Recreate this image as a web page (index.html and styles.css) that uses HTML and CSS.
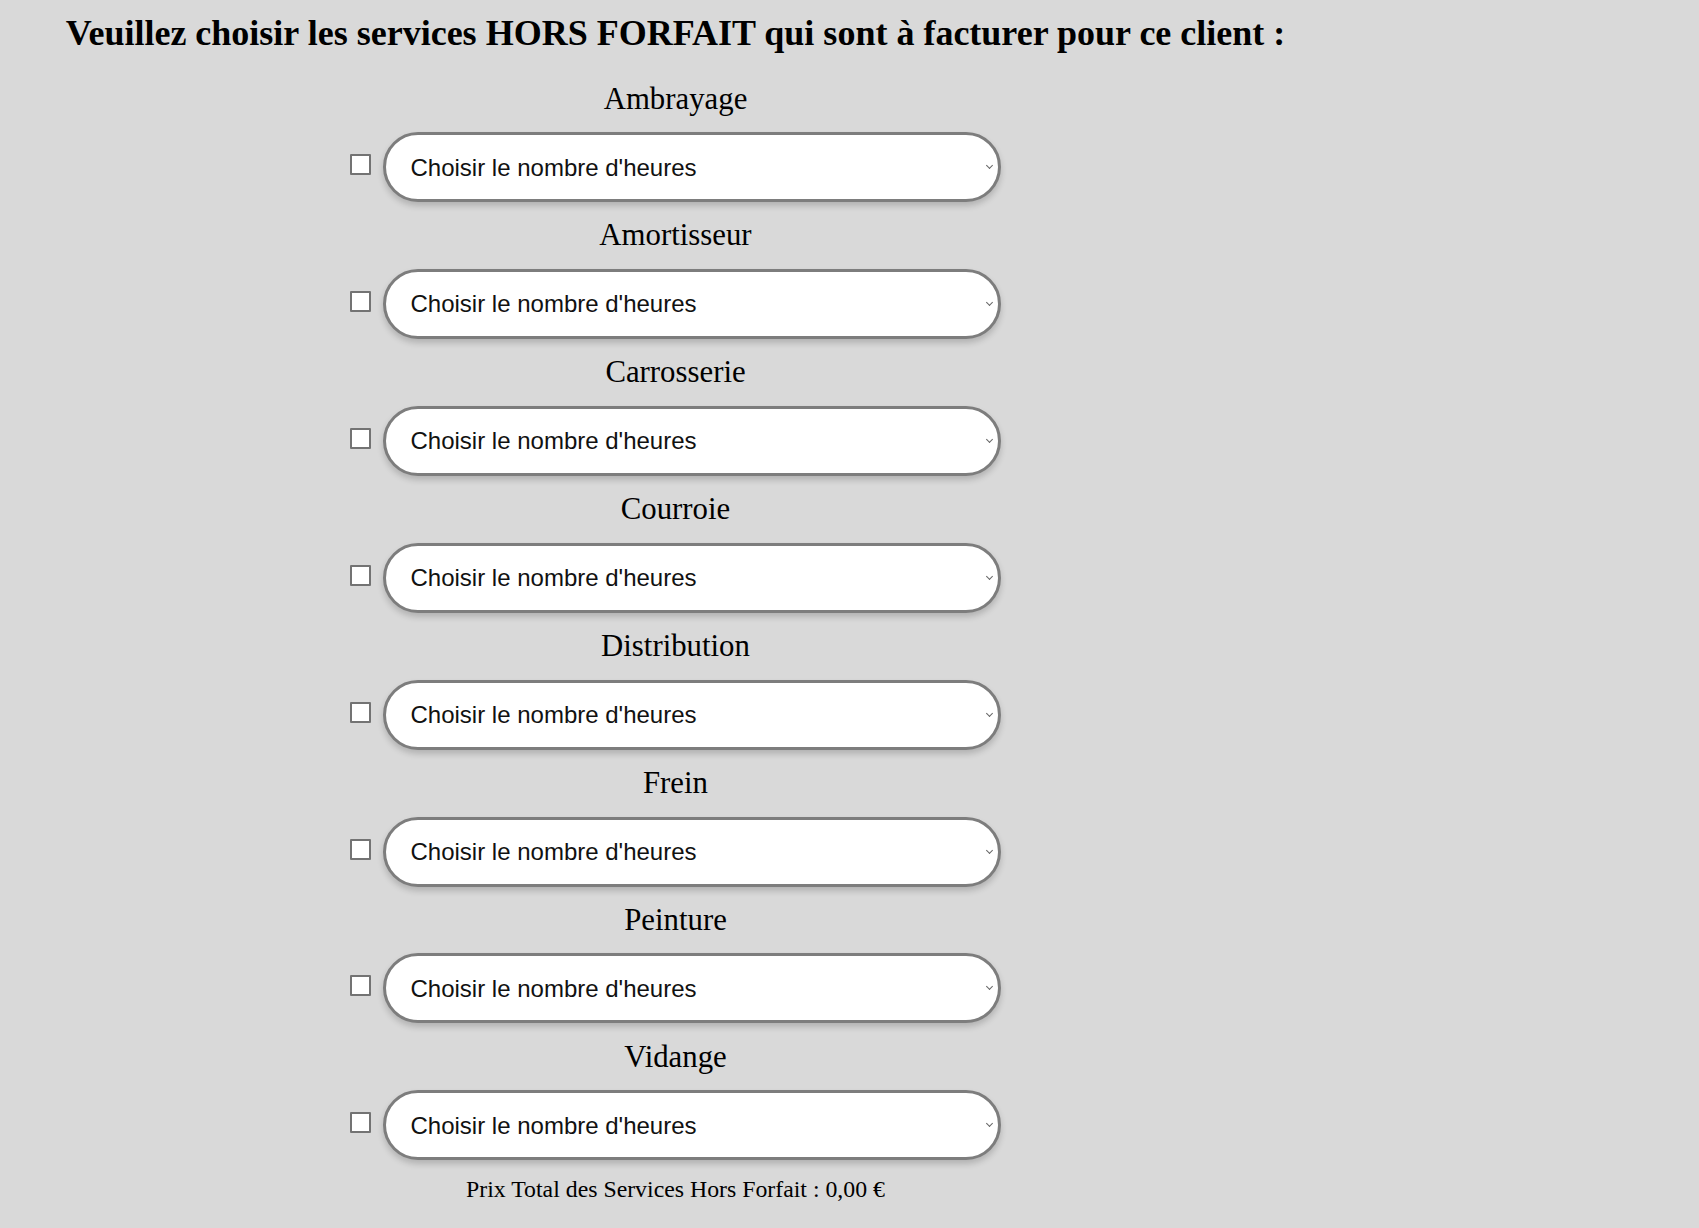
FILE: index.html
```html
<!DOCTYPE html>
<html lang="fr">
<head>
<meta charset="utf-8">
<title>Services hors forfait</title>
<link rel="stylesheet" href="styles.css">
</head>
<body>
<main class="page">
  <h1 class="title">Veuillez choisir les services HORS FORFAIT qui sont à facturer pour ce client :</h1>
  <form class="services">
    <div class="service">
      <label class="service-label" for="s1">Ambrayage</label>
      <div class="service-row">
        <input type="checkbox" class="check">
        <span class="select-wrap"><select id="s1" class="hours"><option>Choisir le nombre d'heures</option></select></span>
      </div>
    </div>
    <div class="service">
      <label class="service-label" for="s2">Amortisseur</label>
      <div class="service-row">
        <input type="checkbox" class="check">
        <span class="select-wrap"><select id="s2" class="hours"><option>Choisir le nombre d'heures</option></select></span>
      </div>
    </div>
    <div class="service">
      <label class="service-label" for="s3">Carrosserie</label>
      <div class="service-row">
        <input type="checkbox" class="check">
        <span class="select-wrap"><select id="s3" class="hours"><option>Choisir le nombre d'heures</option></select></span>
      </div>
    </div>
    <div class="service">
      <label class="service-label" for="s4">Courroie</label>
      <div class="service-row">
        <input type="checkbox" class="check">
        <span class="select-wrap"><select id="s4" class="hours"><option>Choisir le nombre d'heures</option></select></span>
      </div>
    </div>
    <div class="service">
      <label class="service-label" for="s5">Distribution</label>
      <div class="service-row">
        <input type="checkbox" class="check">
        <span class="select-wrap"><select id="s5" class="hours"><option>Choisir le nombre d'heures</option></select></span>
      </div>
    </div>
    <div class="service">
      <label class="service-label" for="s6">Frein</label>
      <div class="service-row">
        <input type="checkbox" class="check">
        <span class="select-wrap"><select id="s6" class="hours"><option>Choisir le nombre d'heures</option></select></span>
      </div>
    </div>
    <div class="service">
      <label class="service-label" for="s7">Peinture</label>
      <div class="service-row">
        <input type="checkbox" class="check">
        <span class="select-wrap"><select id="s7" class="hours"><option>Choisir le nombre d'heures</option></select></span>
      </div>
    </div>
    <div class="service">
      <label class="service-label" for="s8">Vidange</label>
      <div class="service-row">
        <input type="checkbox" class="check">
        <span class="select-wrap"><select id="s8" class="hours"><option>Choisir le nombre d'heures</option></select></span>
      </div>
    </div>
  </form>
  <p class="total">Prix Total des Services Hors Forfait : 0,00 €</p>
</main>
</body>
</html>
```
FILE: styles.css
```css
html, body {
  margin: 0;
  padding: 0;
  background: #d9d9d9;
}

body {
  font-family: "Liberation Serif", "Times New Roman", serif;
  color: #000;
}

.page {
  width: 1351px;
  padding-top: 13px;
  text-align: center;
}

.title {
  margin: 0;
  font-size: 36px;
  line-height: 40px;
  font-weight: bold;
}

.services {
  margin-top: 27.6px;
  display: flex;
  flex-direction: column;
  gap: 15.4px;
}

.service {
  display: flex;
  flex-direction: column;
  align-items: center;
}

.service-label {
  font-size: 30.8px;
  line-height: 36px;
  margin-bottom: 15.5px;
}

.service-row {
  display: flex;
  align-items: flex-start;
  gap: 12px;
}

.check {
  appearance: none;
  -webkit-appearance: none;
  margin: 22px 0 0;
  width: 21px;
  height: 21px;
  border: 2px solid #737373;
  border-radius: 1px;
  background: #fff;
  box-sizing: border-box;
}

.select-wrap {
  position: relative;
  display: block;
}

.select-wrap::after {
  content: "";
  position: absolute;
  right: 9px;
  top: 31px;
  width: 4px;
  height: 4px;
  border-right: 1.5px solid #666;
  border-bottom: 1.5px solid #666;
  transform: rotate(45deg);
  pointer-events: none;
}

.hours {
  appearance: none;
  -webkit-appearance: none;
  display: block;
  box-sizing: border-box;
  width: 618px;
  height: 70px;
  margin: 0;
  padding: 0 30px 0 24.5px;
  border: 3px solid #7d7d7d;
  border-radius: 35px;
  background: #fff;
  box-shadow: 0 4px 6px rgba(0, 0, 0, 0.18);
  font-family: "Liberation Sans", Arial, sans-serif;
  font-size: 24px;
  color: #111;
  text-align: left;
}

.total {
  margin: 14.5px 0 0;
  font-size: 23.8px;
  line-height: 28px;
}
```
